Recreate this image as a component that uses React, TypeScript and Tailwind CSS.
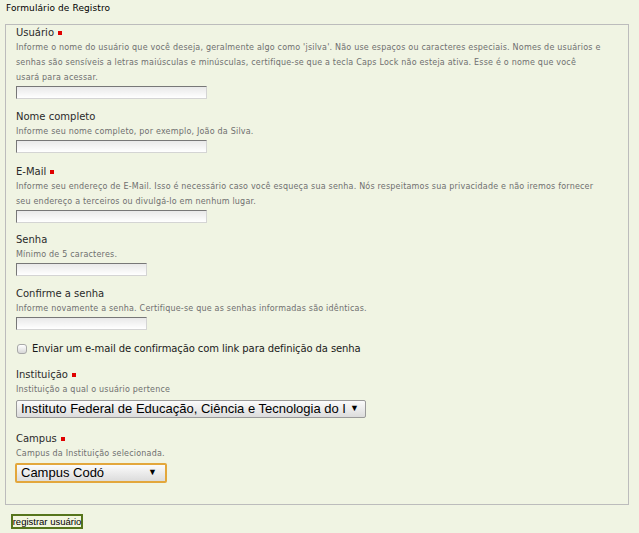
import React from 'react';

const Req = () => <span className="ml-[4px] inline-block h-[4px] w-[4px] bg-[#e00000] align-[1px]" />;

interface FieldProps {
  label: string;
  required?: boolean;
  desc: React.ReactNode;
  className?: string;
  children: React.ReactNode;
}

const Field: React.FC<FieldProps> = ({ label, required, desc, className, children }) => (
  <div className={className}>
    <div className="h-[14px] text-[10px] leading-[14px] text-[#2a2a2a]">
      {label}
      {required && <Req />}
    </div>
    <div className="text-[8px] leading-[15px] tracking-[0.2px] text-[#6f6f6f] pr-[22px]">{desc}</div>
    {children}
  </div>
);

const TextInput = ({ w }: { w: string }) => (
  <div
    className={`mt-[1px] h-[13px] ${w} border border-t-[#777] border-l-[#777] border-r-[#d4d4d4] border-b-[#d4d4d4] bg-gradient-to-b from-[#e9e9e9] to-white`}
  />
);

export default function App() {
  return (
    <div className="h-[533px] w-[639px] overflow-hidden bg-[#f0f4e3] font-['DejaVu_Sans',sans-serif]">
      <div className="pl-[6px] pt-[2px] h-[24px] text-[9px] leading-[12px] text-black tracking-[0.1px]">
        Formulário de Registro
      </div>
      <div className="ml-[5px] mr-[10px] h-[481px] border border-[#bcbcbc] pl-[10px] pt-[1px]">
        <Field
          label="Usuário"
          required
          desc={
            <>
              Informe o nome do usuário que você deseja, geralmente algo como 'jsilva'. Não use espaços ou caracteres
              especiais. Nomes de usuários e senhas são sensíveis a letras maiúsculas e minúsculas, certifique-se que a
              tecla Caps Lock não esteja ativa. Esse é o nome que você
              <br />
              usará para acessar.
            </>
          }
        >
          <TextInput w="w-[191px]" />
        </Field>
        <Field className="mt-[11px]" label="Nome completo" desc="Informe seu nome completo, por exemplo, João da Silva.">
          <TextInput w="w-[191px]" />
        </Field>
        <Field
          className="mt-[12px]"
          label="E-Mail"
          required
          desc="Informe seu endereço de E-Mail. Isso é necessário caso você esqueça sua senha. Nós respeitamos sua privacidade e não iremos fornecer seu endereço a terceiros ou divulgá-lo em nenhum lugar."
        >
          <TextInput w="w-[191px]" />
        </Field>
        <Field className="mt-[10px]" label="Senha" desc="Mínimo de 5 caracteres.">
          <TextInput w="w-[131px]" />
        </Field>
        <Field
          className="mt-[11px]"
          label="Confirme a senha"
          desc="Informe novamente a senha. Certifique-se que as senhas informadas são idênticas."
        >
          <TextInput w="w-[131px]" />
        </Field>
        <div className="mt-[12px] flex h-[14px] items-center">
          <span className="ml-[1px] h-[10px] w-[10px] rounded-[3px] border border-[#a8a8a8] bg-gradient-to-b from-white to-[#d8d8d8]" />
          <span className="ml-[5px] text-[10px] leading-[14px] tracking-[-0.1px] text-[#1a1a1a]">
            Enviar um e-mail de confirmação com link para definição da senha
          </span>
        </div>
        <Field className="mt-[12px]" label="Instituição" required desc="Instituição a qual o usuário pertence">
          <div className="mt-[3px] flex h-[18px] w-[350px] items-center rounded-[2px] border border-[#9a9a9a] bg-gradient-to-b from-[#fbfbfb] to-[#dcdcdc] pl-[4px] pr-[6px] font-['Liberation_Sans',sans-serif] text-[13px] text-black">
            <span className="flex-1 overflow-hidden whitespace-nowrap">
              Instituto Federal de Educação, Ciência e Tecnologia do I
            </span>
            <span className="ml-[4px] text-[9px]">▼</span>
          </div>
        </Field>
        <Field className="mt-[14px]" label="Campus" required desc="Campus da Instituição selecionada.">
          <div className="mt-[2px] -ml-[1px] flex h-[20px] w-[152px] items-center rounded-[2px] border-2 border-[#e3a73c] bg-gradient-to-b from-[#fbfbfb] to-[#dcdcdc] pl-[4px] pr-[8px] font-['Liberation_Sans',sans-serif] text-[13px] text-black">
            <span className="flex-1 whitespace-nowrap">Campus Codó</span>
            <span className="text-[9px]">▼</span>
          </div>
        </Field>
      </div>
      <div className="pl-[11px] pt-[9px]">
        <button className="flex h-[15px] w-[72px] items-center justify-center whitespace-nowrap border-2 border-[#56751c] bg-[#f2f6df] font-['Liberation_Sans',sans-serif] text-[9.5px] leading-[11px] text-black">
          registrar usuário
        </button>
      </div>
    </div>
  );
}
